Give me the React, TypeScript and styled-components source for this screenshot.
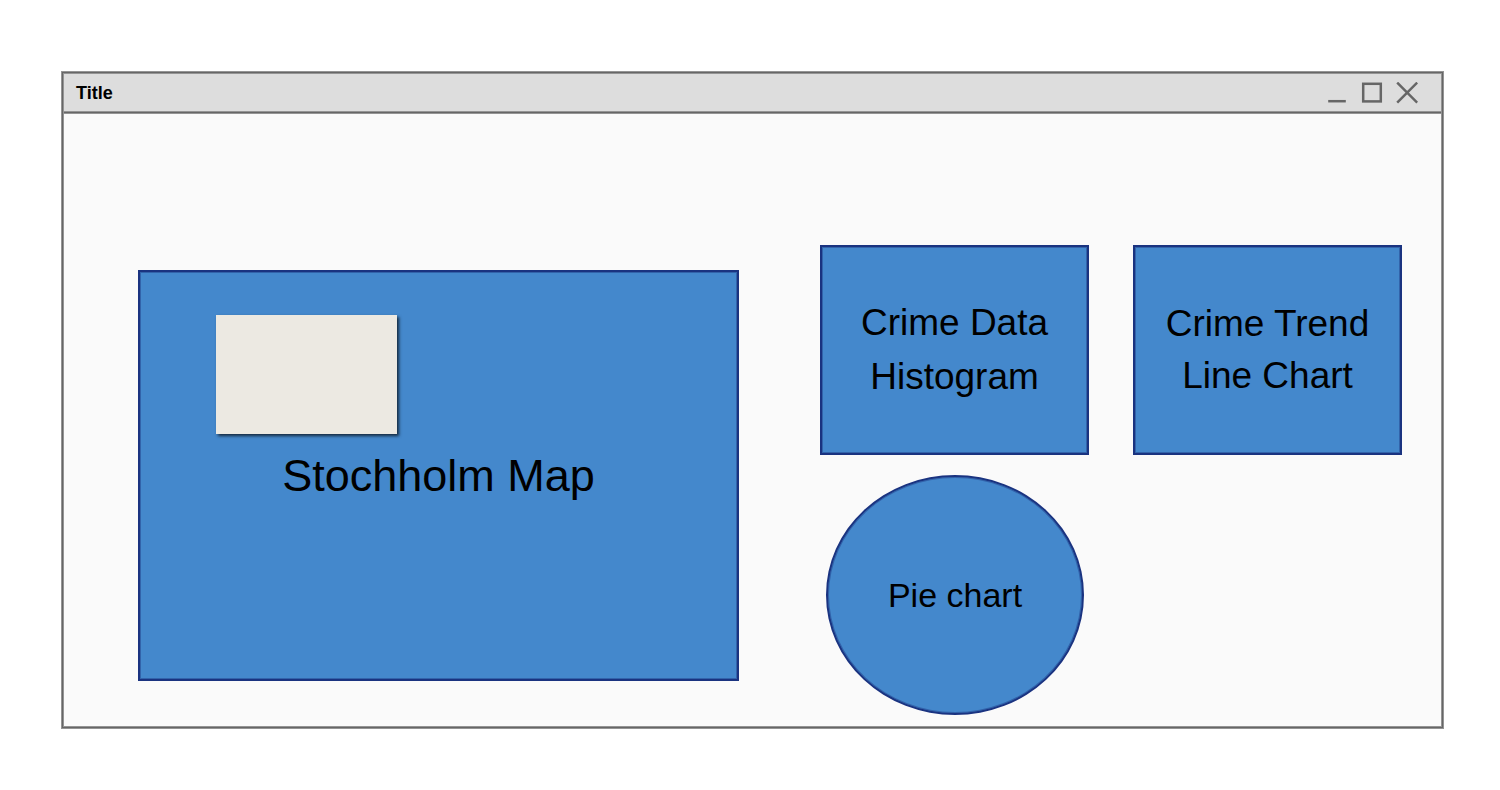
import React from "react";
import styled, { createGlobalStyle } from "styled-components";

const GlobalStyle = createGlobalStyle`
  *, *::before, *::after { box-sizing: border-box; }
  body {
    margin: 0;
    background: #ffffff;
    color: #000000;
    font-family: "Liberation Sans", Arial, Helvetica, sans-serif;
  }
`;

const line = "#666666";
const softLine = "#949494";

const Page = styled.main`
  padding: 72px 57px 60px 62px;
`;

const Frame = styled.section`
  padding: 1px;
  border: 1px solid ${line};
  background: ${softLine};
  box-shadow: 0 0 0 1px ${softLine};
`;

const TitleBar = styled.header`
  position: relative;
  display: flex;
  align-items: center;
  justify-content: space-between;
  height: 39px;
  padding: 0 23px 0 12px;
  background: #dddddd;
  border-bottom: 1px solid ${line};
  box-shadow: inset 0 -1px ${softLine}, 0 1px ${softLine};
`;

const Title = styled.h1`
  margin: 0;
  font-size: 18px;
  line-height: 22px;
  font-weight: 700;
`;

const Controls = styled.div`
  display: flex;
  gap: 13px;
`;

const ControlButton = styled.button`
  display: block;
  width: 22px;
  height: 22px;
  padding: 0;
  border: 0;
  background: none;
  cursor: pointer;

  svg {
    display: block;
    fill: none;
    stroke: #666666;
    stroke-width: 2.5;
  }
`;

const Body = styled.div`
  display: grid;
  grid-template-columns: 601fr 582fr;
  align-items: start;
  gap: 81px;
  padding: 132px 39px 11px 74px;
  background: #fafafa;
`;

const Shape = styled.div<{ $size: number; $leading: number }>`
  display: flex;
  align-items: center;
  justify-content: center;
  background: #4488cc;
  border: 2px solid #1a3380;
  box-shadow: inset 0 0 0 1px #3263aa;
  text-align: center;
  font-size: ${(p) => p.$size}px;
  line-height: ${(p) => p.$leading}px;
`;

const MapPanel = styled(Shape)`
  position: relative;
  height: 411px;
  margin-top: 25px;
`;

const MapNote = styled.div`
  position: absolute;
  top: 43px;
  left: 76px;
  width: 181px;
  height: 119px;
  background: #ece9e2;
  box-shadow: 2px 2px 3px rgba(0, 0, 0, 0.7);
`;

const Charts = styled.div`
  display: grid;
  grid-template-columns: 1fr 1fr;
  gap: 20px 44px;
`;

const ChartPanel = styled(Shape)`
  height: 210px;
`;

const PiePanel = styled(Shape)`
  height: 240px;
  margin: 0 5px 0 6px;
  border-radius: 50%;
`;

export default function App() {
  return (
    <>
      <GlobalStyle />
      <Page>
        <Frame>
          <TitleBar>
            <Title>Title</Title>
            <Controls>
              <ControlButton type="button" aria-label="Minimize">
                <svg width="22" height="22" viewBox="0 0 22 22">
                  <path d="M2.2 19.2H19.8" />
                </svg>
              </ControlButton>
              <ControlButton type="button" aria-label="Maximize">
                <svg width="22" height="22" viewBox="0 0 22 22">
                  <rect x="2.2" y="1.8" width="17.6" height="17.6" />
                </svg>
              </ControlButton>
              <ControlButton type="button" aria-label="Close">
                <svg width="22" height="22" viewBox="0 0 22 22">
                  <path d="M1.2 0.6L21.2 20.6M21.2 0.6L1.2 20.6" />
                </svg>
              </ControlButton>
            </Controls>
          </TitleBar>
          <Body>
            <MapPanel $size={45} $leading={54}>
              <MapNote />
              Stochholm Map
            </MapPanel>
            <Charts>
              <ChartPanel $size={37} $leading={54}>
                Crime Data
                <br />
                Histogram
              </ChartPanel>
              <ChartPanel $size={37} $leading={52}>
                Crime Trend
                <br />
                Line Chart
              </ChartPanel>
              <PiePanel $size={34} $leading={52}>
                Pie chart
              </PiePanel>
            </Charts>
          </Body>
        </Frame>
      </Page>
    </>
  );
}
